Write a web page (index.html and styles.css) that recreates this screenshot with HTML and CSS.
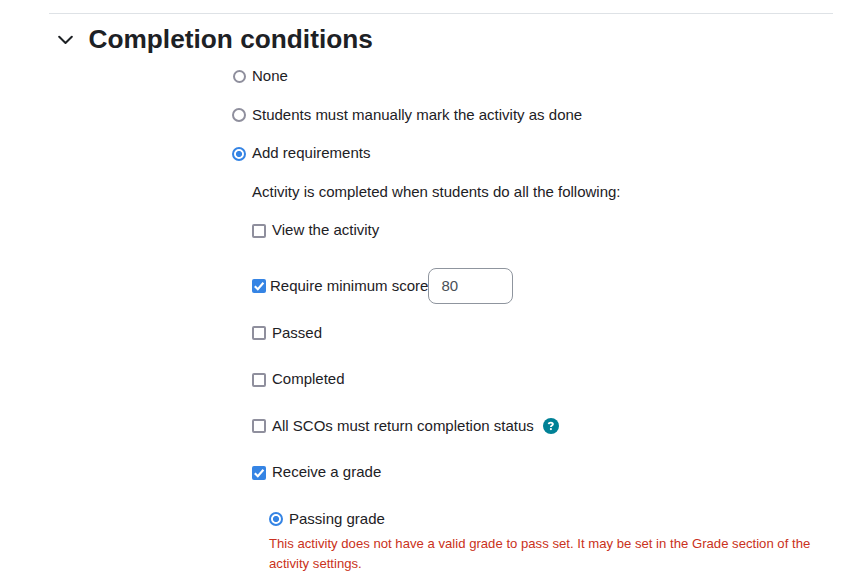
FILE: index.html
```html
<!DOCTYPE html>
<html lang="en">
<head>
    <meta charset="UTF-8">
    <meta name="viewport" content="width=device-width, initial-scale=1.0">
    <title>Completion conditions</title>
    <link rel="stylesheet" href="styles.css">
</head>
<body>
    <section class="fieldset">
        <!-- Section header -->
        <header class="section-header">
            <svg class="chevron" width="16" height="16" viewBox="0 0 16 16">
                <path d="M2.2 4.7 L8.5 11 L14.8 4.7" fill="none" stroke="#1d2125" stroke-width="2" stroke-linecap="round" stroke-linejoin="round"/>
            </svg>
            <h3>Completion conditions</h3>
        </header>

        <!-- Completion options -->
        <div class="options">
            <label class="row none"><input type="radio" name="completion"> None</label>
            <label class="row"><input type="radio" name="completion"> Students must manually mark the activity as done</label>
            <label class="row"><input type="radio" name="completion" checked> Add requirements</label>

            <div class="requirements">
                <p class="row">Activity is completed when students do all the following:</p>
                <label class="row view"><input type="checkbox"> View the activity</label>
                <div class="row score">
                    <label><input type="checkbox" checked> Require minimum score</label>
                    <input type="text" value="80">
                </div>
                <label class="row rule"><input type="checkbox"> Passed</label>
                <label class="row rule"><input type="checkbox"> Completed</label>
                <div class="row rule">
                    <label><input type="checkbox"> All SCOs must return completion status</label>
                    <span class="help">
                        <svg width="16" height="16" viewBox="0 0 16 16">
                            <circle cx="8" cy="8" r="8" fill="#008196"/>
                            <path d="M5.6 6.1 C5.8 4.9 6.7 4.6 7.8 4.6 C9.1 4.6 9.9 5.2 9.9 6.2 C9.9 7.5 7.9 7.4 7.9 8.9" fill="none" stroke="#fff" stroke-width="1.9"/>
                            <circle cx="7.9" cy="11.1" r="1.1" fill="#fff"/>
                        </svg>
                    </span>
                </div>
                <label class="row rule"><input type="checkbox" checked> Receive a grade</label>

                <div class="grade">
                    <label class="row"><input type="radio" name="grade" checked> Passing grade</label>
                    <p class="error">This activity does not have a valid grade to pass set. It may be set in the Grade section of the activity settings.</p>
                </div>
            </div>
        </div>
    </section>
</body>
</html>
```

FILE: styles.css
```css
* {
    margin: 0;
    padding: 0;
    box-sizing: border-box;
}

body {
    background-color: #fff;
    color: #1d2125;
    font-family: "Liberation Sans", Arial, sans-serif;
    font-size: 15px;
    line-height: 22.5px;
    overflow: hidden;
}

.fieldset {
    margin: 13px 25px 0 49px;
    border-top: 1px solid #dee2e6;
}

/* Section header */
.section-header {
    display: flex;
    align-items: center;
    height: 51px;
    padding-left: 8px;
    gap: 15.5px;
}

.section-header h3 {
    margin-bottom: 2px;
    font-size: 26.25px;
    line-height: 32px;
    font-weight: bold;
}

.chevron {
    margin-top: 1px;
}

/* Options */
.options {
    padding-left: 183px;
}

.row,
.row label {
    display: flex;
    align-items: center;
}

.row {
    height: 22.5px;
    margin-bottom: 16px;
}

.requirements {
    padding-left: 20px;
}

.row.view {
    margin-bottom: 26.5px;
}

.row.score {
    height: 36px;
    margin-bottom: 17.6px;
}

.row.rule {
    margin-bottom: 24px;
}

/* Radios and checkboxes */
input[type="radio"],
input[type="checkbox"] {
    appearance: none;
    flex: none;
    width: 14px;
    height: 14px;
    margin: 1px 6px 0 0;
    border: 2px solid #8f8f9d;
    border-radius: 2px;
    background-color: #fff;
}

input[type="radio"] {
    border-radius: 50%;
}

.none input[type="radio"] {
    width: 13px;
    height: 13px;
    margin-left: 0.5px;
    margin-right: 6.5px;
}

input[type="radio"]:checked {
    border-color: #3584e4;
    background-image: radial-gradient(circle, #3584e4 2.7px, #fff 3.4px);
}

input[type="checkbox"]:checked {
    border: none;
    background: #3584e4 url("data:image/svg+xml,%3Csvg xmlns='http://www.w3.org/2000/svg' viewBox='0 0 14 14'%3E%3Cpath d='M2.8 7.2L5.8 10.2L11.4 3.7' fill='none' stroke='%23fff' stroke-width='2.1'/%3E%3C/svg%3E");
}

.score input[type="checkbox"] {
    margin: 0 4px 0 0;
}

.score input[type="text"] {
    width: 85px;
    height: 36px;
    padding: 0 12px 2px;
    border: 1px solid #8f959e;
    border-radius: 8px;
    color: #495057;
    font: inherit;
}

.help {
    display: flex;
    margin-left: 9px;
}

/* Passing grade */
.grade {
    padding-left: 17px;
}

.grade .row {
    margin-bottom: 3.9px;
}

.error {
    color: #ca3120;
    font-size: 13.15px;
    line-height: 19.7px;
}
```
